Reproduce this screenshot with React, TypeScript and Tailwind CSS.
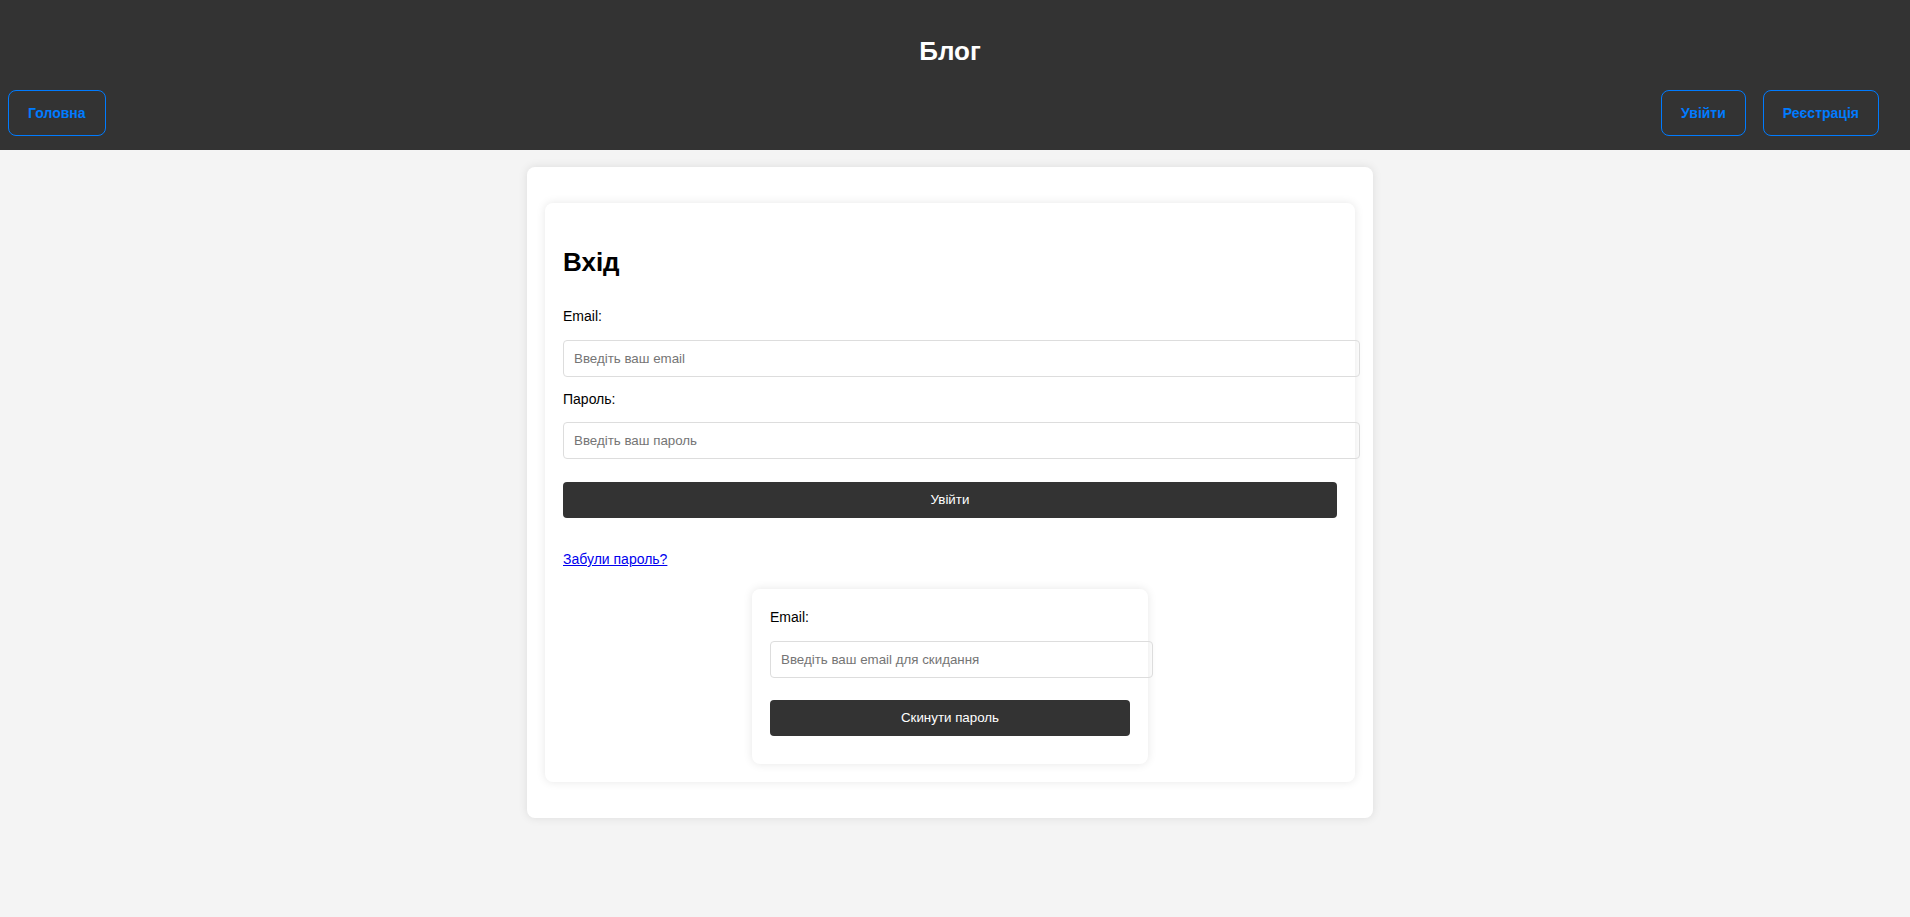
import { useState } from 'react'

function NavButton({ label }: { label: string }) {
  return (
    <button className="h-[46px] px-[19px] rounded-lg border border-[#007bff] text-[#007bff] text-[14px] font-bold leading-4">
      {label}
    </button>
  )
}

export default function App() {
  const [email, setEmail] = useState('')
  const [password, setPassword] = useState('')
  const [resetEmail, setResetEmail] = useState('')

  return (
    <div className="min-h-[917px] bg-[#f4f4f4] font-['Liberation_Sans',Arial,sans-serif] text-black">
      <header className="h-[150px] bg-[#333333] pt-[36px]">
        <h1 className="pr-[10px] text-center text-white text-[26px] leading-[30px] font-bold">Блог</h1>
        <nav className="mt-[24px] flex justify-between pl-2 pr-[31px]">
          <NavButton label="Головна" />
          <div className="flex gap-[17px]">
            <NavButton label="Увійти" />
            <NavButton label="Реєстрація" />
          </div>
        </nav>
      </header>

      <main className="pt-[17px] pr-[10px]">
        <div className="mx-auto w-[846px] bg-white rounded-lg shadow-[0_0_10px_rgba(0,0,0,0.1)] px-[18px] py-[36px]">
          <div className="rounded-lg bg-white shadow-[0_0_10px_rgba(0,0,0,0.1)] p-[18px]">
            <h2 className="mt-[26px] text-[26px] leading-[30px] font-bold">Вхід</h2>

            <label className="block mt-[31px] text-[14px] leading-4">Email:</label>
            <input
              type="email"
              value={email}
              onChange={(e) => setEmail(e.target.value)}
              placeholder="Введіть ваш email"
              className="block mt-4 w-[calc(100%+23px)] h-[37px] px-[10px] border border-[#dddddd] rounded text-[13.33px] placeholder:text-[#757575] outline-none"
            />

            <label className="block mt-[14px] text-[14px] leading-4">Пароль:</label>
            <input
              type="password"
              value={password}
              onChange={(e) => setPassword(e.target.value)}
              placeholder="Введіть ваш пароль"
              className="block mt-[15px] w-[calc(100%+23px)] h-[37px] px-[10px] border border-[#dddddd] rounded text-[13.33px] placeholder:text-[#757575] outline-none"
            />

            <button className="block mt-[23px] w-full h-[36px] rounded bg-[#333333] text-white text-[13.33px]">
              Увійти
            </button>

            <a href="#" className="block w-fit mt-[33px] text-[14px] leading-4 text-[#0000ee] underline">
              Забули пароль?
            </a>

            <div className="mx-auto mt-[22px] w-[396px] rounded-lg bg-white shadow-[0_0_10px_rgba(0,0,0,0.1)] px-[18px] pt-[20px] pb-[28px]">
              <label className="block text-[14px] leading-4">Email:</label>
              <input
                type="email"
                value={resetEmail}
                onChange={(e) => setResetEmail(e.target.value)}
                placeholder="Введіть ваш email для скидання"
                className="block mt-4 w-[calc(100%+23px)] h-[37px] px-[10px] border border-[#dddddd] rounded text-[13.33px] placeholder:text-[#757575] outline-none"
              />
              <button className="block mt-[22px] w-full h-[36px] rounded bg-[#333333] text-white text-[13.33px]">
                Скинути пароль
              </button>
            </div>
          </div>
        </div>
      </main>
    </div>
  )
}
